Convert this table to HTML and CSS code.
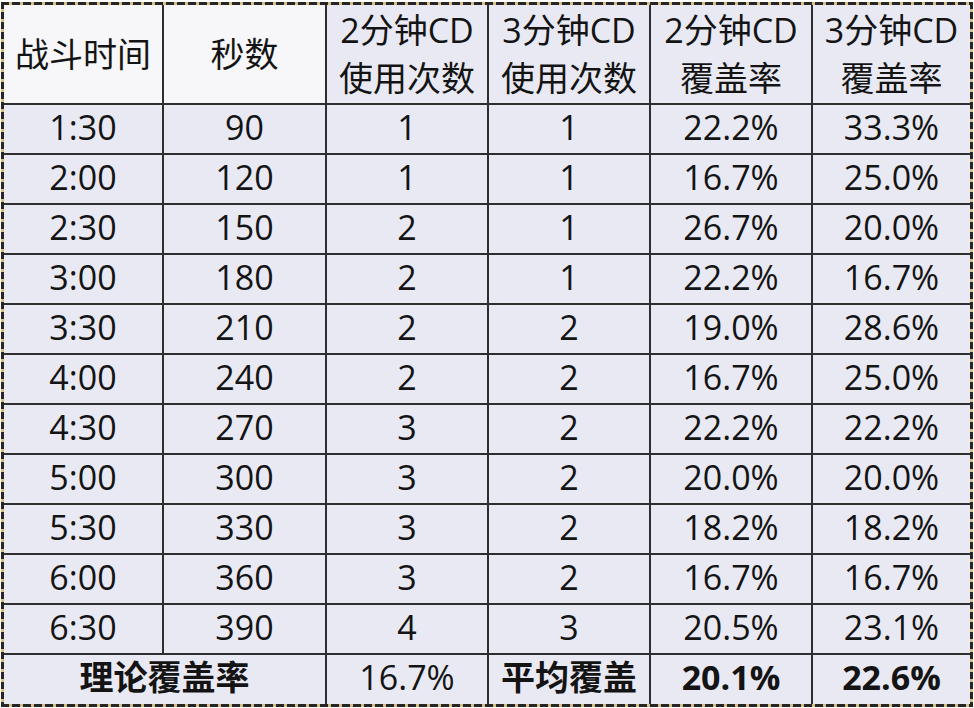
FILE: index.html
```html
<!DOCTYPE html>
<html lang="zh">
<head>
<meta charset="utf-8">
<title>CD覆盖率</title>
<link rel="stylesheet" href="styles.css">
</head>
<body>
<div class="frame">
  <table class="sheet">
    <colgroup>
      <col class="c1"><col class="c2"><col class="c3"><col class="c4"><col class="c5"><col class="c6">
    </colgroup>
    <thead>
      <tr class="head">
        <th class="plain">战斗时间</th>
        <th class="plain">秒数</th>
        <th>2分钟CD<br>使用次数</th>
        <th>3分钟CD<br>使用次数</th>
        <th>2分钟CD<br>覆盖率</th>
        <th>3分钟CD<br>覆盖率</th>
      </tr>
    </thead>
    <tbody>
      <tr><td>1:30</td><td>90</td><td>1</td><td>1</td><td>22.2%</td><td>33.3%</td></tr>
      <tr><td>2:00</td><td>120</td><td>1</td><td>1</td><td>16.7%</td><td>25.0%</td></tr>
      <tr><td>2:30</td><td>150</td><td>2</td><td>1</td><td>26.7%</td><td>20.0%</td></tr>
      <tr><td>3:00</td><td>180</td><td>2</td><td>1</td><td>22.2%</td><td>16.7%</td></tr>
      <tr><td>3:30</td><td>210</td><td>2</td><td>2</td><td>19.0%</td><td>28.6%</td></tr>
      <tr><td>4:00</td><td>240</td><td>2</td><td>2</td><td>16.7%</td><td>25.0%</td></tr>
      <tr><td>4:30</td><td>270</td><td>3</td><td>2</td><td>22.2%</td><td>22.2%</td></tr>
      <tr><td>5:00</td><td>300</td><td>3</td><td>2</td><td>20.0%</td><td>20.0%</td></tr>
      <tr><td>5:30</td><td>330</td><td>3</td><td>2</td><td>18.2%</td><td>18.2%</td></tr>
      <tr><td>6:00</td><td>360</td><td>3</td><td>2</td><td>16.7%</td><td>16.7%</td></tr>
      <tr><td>6:30</td><td>390</td><td>4</td><td>3</td><td>20.5%</td><td>23.1%</td></tr>
    </tbody>
    <tfoot>
      <tr class="foot">
        <td colspan="2" class="bold">理论覆盖率</td>
        <td>16.7%</td>
        <td class="bold">平均覆盖</td>
        <td class="bold">20.1%</td>
        <td class="bold">22.6%</td>
      </tr>
    </tfoot>
  </table>
</div>
</body>
</html>
```
FILE: styles.css
```css
html, body {
  margin: 0;
  padding: 0;
  background: #ffffff;
}

body {
  width: 974px;
  height: 708px;
  overflow: hidden;
}

.frame {
  margin: 2px 0 0 1px;
  width: 966px;
  height: 699px;
  padding: 3px;
  background:
    repeating-linear-gradient(90deg, #262626 0 8px, #d8bf86 8px 11px) left top / 100% 3px no-repeat,
    repeating-linear-gradient(90deg, #262626 0 8px, #d8bf86 8px 11px) left bottom / 100% 3px no-repeat,
    repeating-linear-gradient(180deg, #262626 0 7px, #d8bf86 7px 10px) left top / 3px 100% no-repeat,
    repeating-linear-gradient(180deg, #262626 0 7px, #d8bf86 7px 10px) right top / 3px 100% no-repeat,
    #ffffff;
}

.sheet {
  width: 966px;
  height: 699px;
  table-layout: fixed;
  border-collapse: collapse;
  border: hidden;
  font-family: "Open Sans", "Noto Sans CJK SC", sans-serif;
  font-size: 34px;
  color: #141414;
}

.c1 { width: 159px; }
.c2 { width: 163px; }
.c3 { width: 162px; }
.c4 { width: 162px; }
.c5 { width: 162px; }
.c6 { width: 158px; }

.sheet th,
.sheet td {
  border: 2px solid #2e2e2e;
  padding: 0;
  text-align: center;
  vertical-align: middle;
  background: #e9e9f3;
  font-weight: 400;
  white-space: nowrap;
}

.sheet th {
  line-height: 48px;
  padding-bottom: 1px;
}

.sheet th.plain {
  background: #f7f7fa;
}

.head {
  height: 99px;
}

.sheet tbody tr,
.foot {
  height: 50px;
}

.sheet td {
  line-height: 40px;
  padding-bottom: 5px;
}

.sheet td.bold {
  font-weight: 700;
}
```
